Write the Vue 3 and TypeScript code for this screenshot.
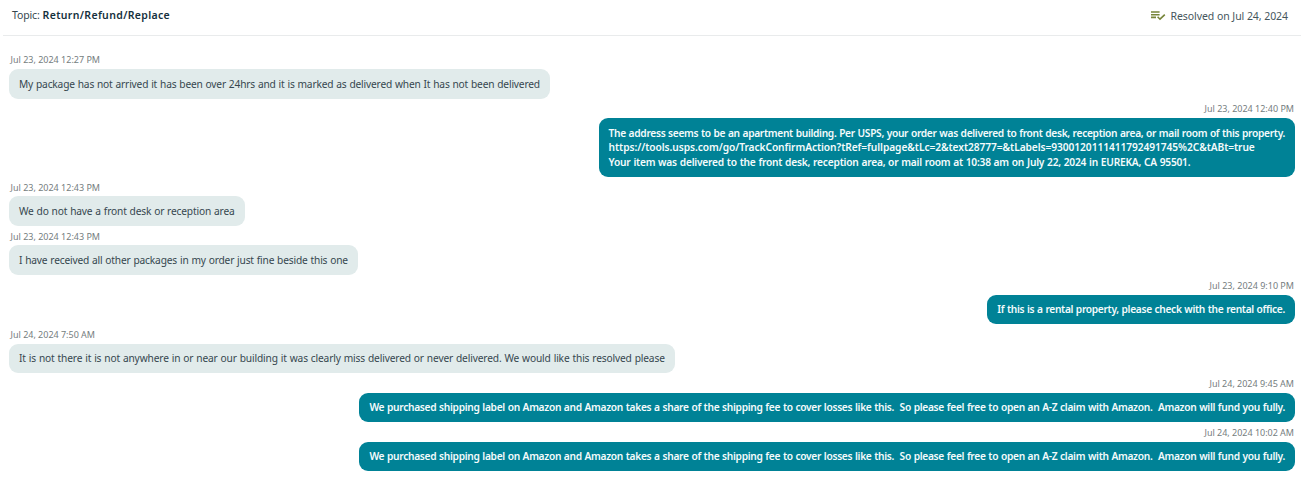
<script setup lang="ts">
interface Line {
  text: string
  width: number
}

interface Message {
  time: string
  timeWidth: number
  outgoing: boolean
  lines: Line[]
}

const family = '"Noto Sans"'
const context = document.createElement('canvas').getContext('2d')!

// Letter spacing that sets a line of text to the given width.
function tracking(text: string, width: number, size: number, weight: number) {
  context.font = `${weight} ${size * 10}px ${family}`
  const natural = context.measureText(text).width / 10
  return { letterSpacing: `${((width - natural) / text.length).toFixed(4)}px` }
}

// As above, for message text, which also carries 0.4px of extra word spacing.
function messageTracking(line: Line, outgoing: boolean) {
  const spaces = line.text.split(' ').length - 1
  return tracking(line.text, line.width - spaces * 0.4, 10.2, outgoing ? 600 : 400)
}

const shippingLabel =
  'We purchased shipping label on Amazon and Amazon takes a share of the shipping fee to cover losses like this.  So please feel free to open an A-Z claim with Amazon.  Amazon will fund you fully.'

const messages: Message[] = [
  {
    time: 'Jul 23, 2024 12:27 PM',
    timeWidth: 89.5,
    outgoing: false,
    lines: [
      {
        text: 'My package has not arrived it has been over 24hrs and it is marked as delivered when It has not been delivered',
        width: 521.6,
      },
    ],
  },
  {
    time: 'Jul 23, 2024 12:40 PM',
    timeWidth: 89.5,
    outgoing: true,
    lines: [
      {
        text: 'The address seems to be an apartment building. Per USPS, your order was delivered to front desk, reception area, or mail room of this property.',
        width: 677.3,
      },
      {
        text: 'https://tools.usps.com/go/TrackConfirmAction?tRef=fullpage&tLc=2&text28777=&tLabels=9300120111411792491745%2C&tABt=true',
        width: 647,
      },
      {
        text: 'Your item was delivered to the front desk, reception area, or mail room at 10:38 am on July 22, 2024 in EUREKA, CA 95501.',
        width: 582.5,
      },
    ],
  },
  {
    time: 'Jul 23, 2024 12:43 PM',
    timeWidth: 89.5,
    outgoing: false,
    lines: [{ text: 'We do not have a front desk or reception area', width: 215.8 }],
  },
  {
    time: 'Jul 23, 2024 12:43 PM',
    timeWidth: 89.5,
    outgoing: false,
    lines: [
      { text: 'I have received all other packages in my order just fine beside this one', width: 329.3 },
    ],
  },
  {
    time: 'Jul 23, 2024 9:10 PM',
    timeWidth: 84.5,
    outgoing: true,
    lines: [
      { text: 'If this is a rental property, please check with the rental office.', width: 288 },
    ],
  },
  {
    time: 'Jul 24, 2024 7:50 AM',
    timeWidth: 84.5,
    outgoing: false,
    lines: [
      {
        text: 'It is not there it is not anywhere in or near our building it was clearly miss delivered or never delivered. We would like this resolved please',
        width: 646.6,
      },
    ],
  },
  {
    time: 'Jul 24, 2024 9:45 AM',
    timeWidth: 84.5,
    outgoing: true,
    lines: [{ text: shippingLabel, width: 916.8 }],
  },
  {
    time: 'Jul 24, 2024 10:02 AM',
    timeWidth: 89.5,
    outgoing: true,
    lines: [{ text: shippingLabel, width: 916.8 }],
  },
]
</script>

<template>
  <main class="page">
    <header class="topbar">
      <div class="topic">
        <span class="label">Topic:</span>
        <strong :style="tracking('Return/Refund/Replace', 127.5, 10.5, 600)">Return/Refund/Replace</strong>
      </div>
      <div class="status">
        <svg class="status-icon" viewBox="0 0 15 10" width="15" height="10">
          <path d="M0 1h8.6M0 3.7h8.6M0 6.4h5" />
          <path d="M6.6 5.8l2.4 2.4l4.8-4.6" />
        </svg>
        <span :style="tracking('Resolved on Jul 24, 2024', 117.5, 10.5, 400)">Resolved on Jul 24, 2024</span>
      </div>
    </header>

    <section class="thread">
      <article
        v-for="(message, index) in messages"
        :key="index"
        class="message"
        :class="{ outgoing: message.outgoing }"
      >
        <time class="time" :style="tracking(message.time, message.timeWidth, 9, 400)">{{ message.time }}</time>
        <div class="bubble">
          <p
            v-for="line in message.lines"
            :key="line.text"
            class="line"
            :style="messageTracking(line, message.outgoing)"
          >{{ line.text }}</p>
        </div>
      </article>
    </section>
  </main>
</template>

<style>
body {
  margin: 0;
  background: #fff;
}
</style>

<style scoped>
.page {
  box-sizing: border-box;
  height: 493px;
  overflow: hidden;
  background: #fff;
  color: #36474f;
  font-family: "Noto Sans", "Open Sans", sans-serif;
  font-size: 10.5px;
  line-height: 14.6px;
}

.topbar {
  display: flex;
  justify-content: space-between;
  box-sizing: border-box;
  height: 36px;
  margin: 0 5px 0 3px;
  padding: 8px 13px 0 9px;
  border-bottom: 1px solid #e9ebec;
}

.topic {
  display: flex;
  gap: 3px;
}

.topic .label {
  letter-spacing: -0.15px;
}

.topic strong {
  color: #14303d;
  font-weight: 600;
}

.status {
  display: flex;
  gap: 4px;
  padding-top: 1px;
  color: #46565d;
}

.status-icon {
  margin-top: 2px;
  fill: none;
  stroke: #77853a;
  stroke-width: 1.6;
}

.thread {
  padding: 13.6px 11px 0 9px;
}

.message {
  display: flex;
  flex-direction: column;
  align-items: flex-start;
}

.message.outgoing {
  align-items: flex-end;
}

.time {
  height: 15.83px;
  margin: 0 1px 0 1.5px;
  padding-top: 3.65px;
  color: #757d80;
  font-size: 9px;
  line-height: 13px;
}

.bubble {
  padding: 7.5px 10px;
  border-radius: 9px;
  background: #e1ebeb;
  font-size: 10.2px;
  word-spacing: 0.4px;
}

.outgoing .bubble {
  background: #008296;
  color: #f4fbfc;
  font-weight: 600;
}

.line {
  margin: 0;
  white-space: pre;
}
</style>
